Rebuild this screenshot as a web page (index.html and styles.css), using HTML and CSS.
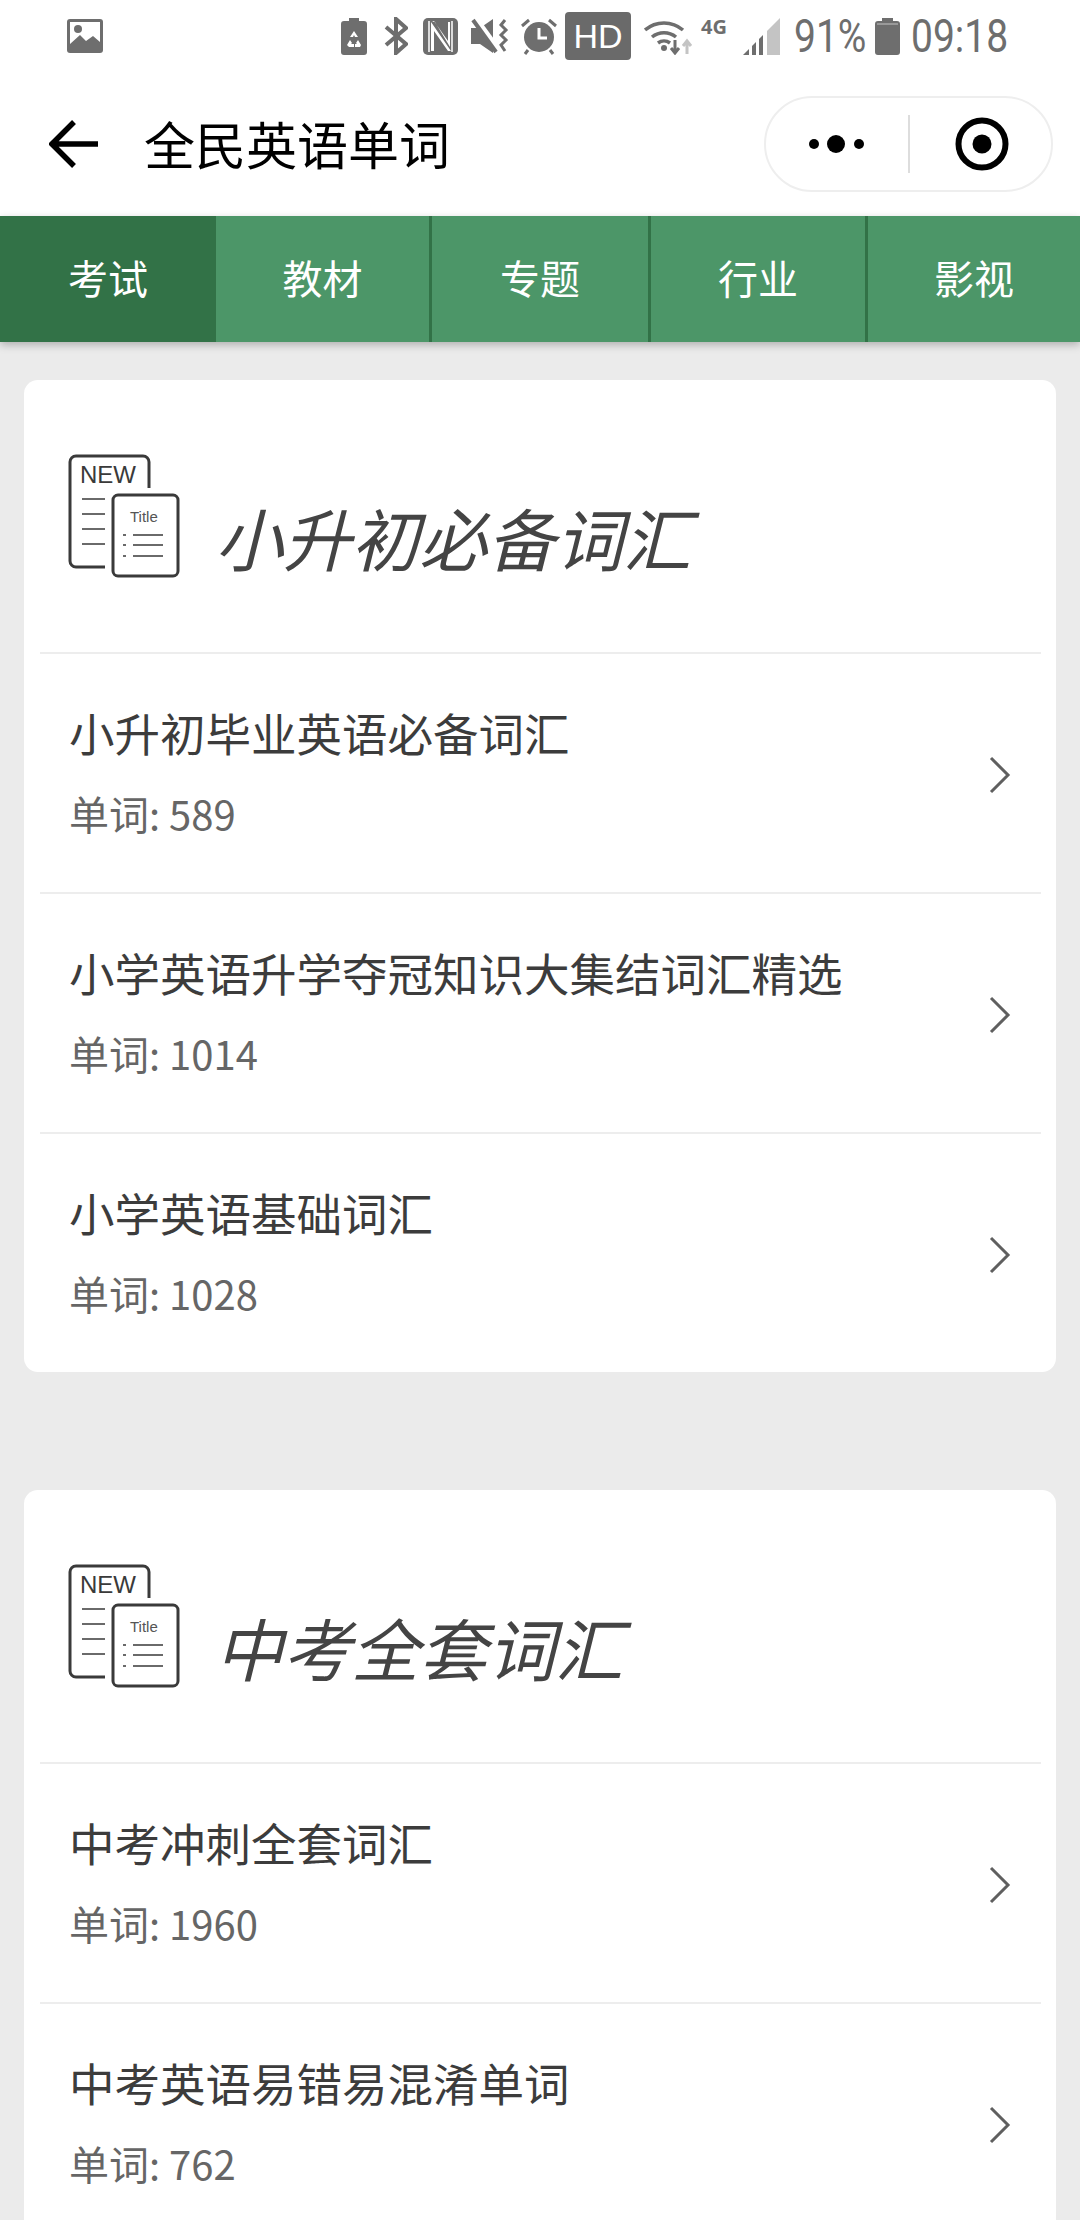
FILE: index.html
```html
<!DOCTYPE html>
<html>
<head>
  <meta charset="utf-8">
  <title>全民英语单词</title>
  <link rel="stylesheet" href="styles.css">
</head>
<body>
<div class="page">
  <div class="status-bar">
    <svg class="ic-pic" width="36" height="34" viewBox="0 0 36 34"><rect width="36" height="34" rx="3" fill="#6e6e6e"/><path d="M3 3h30v20l-7-6-7 5-6-6-10 9z" fill="#fff"/><circle cx="11" cy="10" r="4" fill="#6e6e6e"/></svg>
    <div class="status-right">
      <svg class="ic-recycle" width="26" height="37" viewBox="0 0 26 37"><path d="M8 0h10v3h5a3 3 0 0 1 3 3v28a3 3 0 0 1-3 3H3a3 3 0 0 1-3-3V6a3 3 0 0 1 3-3h5z" fill="#6e6e6e"/><path d="M13 13l4 6h-3l-1-2-1 2H9zM6 27l3-5 2 3-1 1h3v3H8zM20 27l-3-5-2 3 1 1h-2v3h5z" fill="#fff"/></svg>
      <svg class="ic-bt" width="24" height="38" viewBox="0 0 24 38"><path d="M2 10l20 17-10 9V2l10 9-20 17" fill="none" stroke="#6e6e6e" stroke-width="4"/></svg>
      <svg class="ic-nfc" width="35" height="37" viewBox="0 0 35 37"><rect width="35" height="37" rx="5" fill="#6e6e6e"/><path d="M9 4h3l15 25V4h-2v19L11 3zM8 4v29h3V13l14 20h3z" fill="#fff"/><path d="M6 3v31M29 3v31" stroke="#fff" stroke-width="1.5"/></svg>
      <svg class="ic-mute" width="39" height="36" viewBox="0 0 39 36"><path d="M0 10h9L22 1v34L9 26H0z" fill="#6e6e6e"/><path d="M4 0l24 33" stroke="#fff" stroke-width="6"/><path d="M2 2l23 32" stroke="#6e6e6e" stroke-width="4"/><path d="M34 2l-4 5 5 5-5 5 5 5-5 5 4 6" fill="none" stroke="#6e6e6e" stroke-width="3"/></svg>
      <svg class="ic-alarm" width="38" height="38" viewBox="0 0 38 38"><circle cx="19" cy="20" r="15" fill="#6e6e6e"/><path d="M19 11v10h8" fill="none" stroke="#fff" stroke-width="3"/><path d="M2 9l7-6M36 9l-7-6M8 33l-3 4M30 33l3 4" stroke="#6e6e6e" stroke-width="3"/></svg>
      <div class="hd-badge">HD</div>
      <svg class="ic-wifi" width="49" height="37" viewBox="0 0 49 37"><g fill="none" stroke="#6e6e6e" stroke-width="3.5"><path d="M1 12a29 29 0 0 1 38 0"/><path d="M8 19a19 19 0 0 1 24 0"/><path d="M14 25a10 10 0 0 1 12 0"/></g><circle cx="20" cy="30" r="3" fill="#6e6e6e"/><path d="M31 22v13m-4-5l4 5 4-5" fill="none" stroke="#6e6e6e" stroke-width="3"/><path d="M43 36V23m-4 5l4-5 4 5" fill="none" stroke="#c4c4c4" stroke-width="3"/></svg>
      <div class="net-label">4G</div>
      <svg class="ic-signal" width="37" height="37" viewBox="0 0 37 37"><path d="M0 37l6-6v6z" fill="#6e6e6e"/><path d="M9 28l4-4v13H9zM16 21l4-4v20h-4z" fill="#6e6e6e"/><path d="M24 13L37 0v37H24z" fill="#c4c4c4"/></svg>
      <div class="status-text pct"><span class="squeeze">91%</span></div>
      <svg class="ic-batt" width="25" height="37" viewBox="0 0 25 37"><path d="M7 0h11v3h4a3 3 0 0 1 3 3v28a3 3 0 0 1-3 3H3a3 3 0 0 1-3-3V6a3 3 0 0 1 3-3h4z" fill="#6e6e6e"/><path d="M2 6h21" stroke="#fff" stroke-width="1" opacity=".6"/></svg>
      <div class="status-text time"><span class="squeeze">09:18</span></div>
    </div>
  </div>

  <div class="nav-bar">
    <svg class="back-icon" width="50" height="48" viewBox="0 0 50 48"><path d="M49 24H4M25 2L3 24l22 22" fill="none" stroke="#000" stroke-width="5.5"/></svg>
    <div class="nav-title">全民英语单词</div>
    <div class="capsule">
      <svg class="capsule-more" width="60" height="20" viewBox="0 0 60 20"><circle cx="7" cy="10" r="5" fill="#000"/><circle cx="29" cy="10" r="9" fill="#000"/><circle cx="52" cy="10" r="5" fill="#000"/></svg>
      <div class="capsule-line"></div>
      <svg class="capsule-close" width="54" height="54" viewBox="0 0 54 54"><circle cx="27" cy="27" r="23.5" fill="none" stroke="#000" stroke-width="6"/><circle cx="27" cy="27" r="9.5" fill="#000"/></svg>
    </div>
  </div>

  <div class="tabs">
    <div class="tab active">考试</div>
    <div class="tab">教材</div>
    <div class="tab">专题</div>
    <div class="tab">行业</div>
    <div class="tab">影视</div>
  </div>

  <div class="card">
    <div class="card-head">
      <svg class="doc-icon" width="112" height="124" viewBox="0 0 112 124">
        <path d="M81 34V8a6 6 0 0 0-6-6H8a6 6 0 0 0-6 6v99a6 6 0 0 0 6 6h29" fill="none" stroke="#3a3a3a" stroke-width="3"/>
        <rect x="45" y="41" width="65" height="81" rx="5" fill="#fff" stroke="#3a3a3a" stroke-width="3"/>
        <text x="12" y="29" class="doc-new">NEW</text>
        <text x="62" y="68" class="doc-title">Title</text>
        <path d="M14 45h23M14 60h23M14 75h23M14 90h23M65 81h30M65 91h30M65 102h30M55 81h3M55 91h3M55 102h3" stroke="#3a3a3a" stroke-width="1.5"/>
      </svg>
      <div class="card-title">小升初必备词汇</div>
    </div>
    <div class="row">
      <div class="row-text">
        <div class="row-name">小升初毕业英语必备词汇</div>
        <div class="row-count">单词: 589</div>
      </div>
      <svg class="chevron" width="22" height="38" viewBox="0 0 22 38"><path d="M2 2l17 17L2 36" fill="none" stroke="#5f5f5f" stroke-width="3"/></svg>
    </div>
    <div class="row">
      <div class="row-text">
        <div class="row-name">小学英语升学夺冠知识大集结词汇精选</div>
        <div class="row-count">单词: 1014</div>
      </div>
      <svg class="chevron" width="22" height="38" viewBox="0 0 22 38"><path d="M2 2l17 17L2 36" fill="none" stroke="#5f5f5f" stroke-width="3"/></svg>
    </div>
    <div class="row">
      <div class="row-text">
        <div class="row-name">小学英语基础词汇</div>
        <div class="row-count">单词: 1028</div>
      </div>
      <svg class="chevron" width="22" height="38" viewBox="0 0 22 38"><path d="M2 2l17 17L2 36" fill="none" stroke="#5f5f5f" stroke-width="3"/></svg>
    </div>
  </div>

  <div class="card">
    <div class="card-head">
      <svg class="doc-icon" width="112" height="124" viewBox="0 0 112 124">
        <path d="M81 34V8a6 6 0 0 0-6-6H8a6 6 0 0 0-6 6v99a6 6 0 0 0 6 6h29" fill="none" stroke="#3a3a3a" stroke-width="3"/>
        <rect x="45" y="41" width="65" height="81" rx="5" fill="#fff" stroke="#3a3a3a" stroke-width="3"/>
        <text x="12" y="29" class="doc-new">NEW</text>
        <text x="62" y="68" class="doc-title">Title</text>
        <path d="M14 45h23M14 60h23M14 75h23M14 90h23M65 81h30M65 91h30M65 102h30M55 81h3M55 91h3M55 102h3" stroke="#3a3a3a" stroke-width="1.5"/>
      </svg>
      <div class="card-title">中考全套词汇</div>
    </div>
    <div class="row">
      <div class="row-text">
        <div class="row-name">中考冲刺全套词汇</div>
        <div class="row-count">单词: 1960</div>
      </div>
      <svg class="chevron" width="22" height="38" viewBox="0 0 22 38"><path d="M2 2l17 17L2 36" fill="none" stroke="#5f5f5f" stroke-width="3"/></svg>
    </div>
    <div class="row">
      <div class="row-text">
        <div class="row-name">中考英语易错易混淆单词</div>
        <div class="row-count">单词: 762</div>
      </div>
      <svg class="chevron" width="22" height="38" viewBox="0 0 22 38"><path d="M2 2l17 17L2 36" fill="none" stroke="#5f5f5f" stroke-width="3"/></svg>
    </div>
  </div>
</div>
</body>
</html>
```

FILE: styles.css
```css
body {
  margin: 0;
  background-color: #ebebeb;
  font-family: "Noto Sans CJK SC", "Noto Sans", sans-serif;
}

.page {
  height: 2220px;
  overflow: hidden;
}

svg {
  display: block;
  flex-shrink: 0;
}

.status-bar {
  display: flex;
  align-items: center;
  height: 72px;
  padding: 0 72px 0 67px;
  background-color: #fff;
}

.status-right {
  display: flex;
  align-items: center;
  margin-left: auto;
}

.ic-bt { margin-left: 17px; }
.ic-nfc { margin-left: 15px; }
.ic-mute { margin-left: 13px; }
.ic-alarm { margin-left: 10px; }
.ic-wifi { margin-left: 13px; }
.ic-signal { margin-left: 13px; }
.ic-batt { margin-left: 10px; }

.hd-badge {
  width: 66px;
  height: 48px;
  margin-left: 7px;
  border-radius: 4px;
  background-color: #6a6a6a;
  color: #fff;
  font-family: "Liberation Sans", sans-serif;
  font-size: 34px;
  line-height: 48px;
  text-align: center;
}

.net-label {
  align-self: flex-start;
  width: 29px;
  margin: 17px 0 0 8px;
  color: #6e6e6e;
  font-family: "Open Sans", sans-serif;
  font-size: 20px;
  font-weight: 700;
  line-height: 20px;
}

.status-text {
  color: #6e6e6e;
  font-family: Roboto, sans-serif;
  font-size: 47px;
  line-height: 72px;
  white-space: nowrap;
}

.squeeze {
  display: inline-block;
  transform: scaleX(0.83);
  transform-origin: left center;
}

.pct {
  width: 71px;
  margin-left: 14px;
}

.time {
  width: 97px;
  margin-left: 11px;
}

.nav-bar {
  display: flex;
  align-items: center;
  height: 144px;
  background-color: #fff;
}

.back-icon {
  margin-left: 49px;
}

.nav-title {
  margin-left: 45px;
  margin-top: -2px;
  color: #000;
  font-size: 51px;
  line-height: 60px;
}

.capsule {
  display: flex;
  align-items: center;
  box-sizing: border-box;
  width: 289px;
  height: 96px;
  margin-left: auto;
  margin-right: 27px;
  border: 2px solid #eeeeee;
  border-radius: 48px;
}

.capsule-more {
  margin-left: 41px;
}

.capsule-line {
  width: 2px;
  height: 58px;
  margin-left: 41px;
  background-color: #dddddd;
}

.capsule-close {
  margin-left: 45px;
}

.tabs {
  position: relative;
  display: flex;
  height: 126px;
  background-color: #4c9668;
  box-shadow: 0 3px 8px rgba(0, 0, 0, 0.25);
}

.tab {
  flex: 0 0 216px;
  box-sizing: border-box;
  border-right: 3px solid #327247;
  color: #fff;
  font-size: 40px;
  line-height: 122px;
  text-align: center;
}

.tab:nth-child(3) {
  flex-basis: 219px;
}

.tab:nth-child(4) {
  flex-basis: 217px;
}

.tab:last-child {
  flex: 1;
  border-right: none;
}

.tab.active {
  border-right: none;
  background-color: #327247;
}

.card {
  margin: 38px 24px 118px;
  padding: 0 15px 0 16px;
  border-radius: 14px;
  background-color: #fff;
}

.card-head {
  display: flex;
  align-items: flex-start;
  height: 272px;
  box-sizing: border-box;
  padding: 74px 0 0 28px;
}

.doc-new {
  fill: #3a3a3a;
  font-family: "Liberation Sans", sans-serif;
  font-size: 24px;
}

.doc-title {
  fill: #555;
  font-family: "Liberation Sans", sans-serif;
  font-size: 15px;
}

.card-title {
  margin: 38px 0 0 35px;
  color: #444;
  font-size: 68px;
  font-style: italic;
  line-height: 90px;
}

.row {
  display: flex;
  align-items: center;
  box-sizing: border-box;
  height: 240px;
  padding: 2px 30px 0 29px;
  border-top: 2px solid #ededed;
}

.row-text {
  flex: 1;
}

.row-name {
  margin-top: -3px;
  color: #3c3c3c;
  font-size: 45.5px;
  line-height: 60px;
}

.row-count {
  margin-top: 21px;
  color: #666;
  font-size: 40px;
  line-height: 60px;
}

.chevron {
  margin-top: 2px;
}
```
